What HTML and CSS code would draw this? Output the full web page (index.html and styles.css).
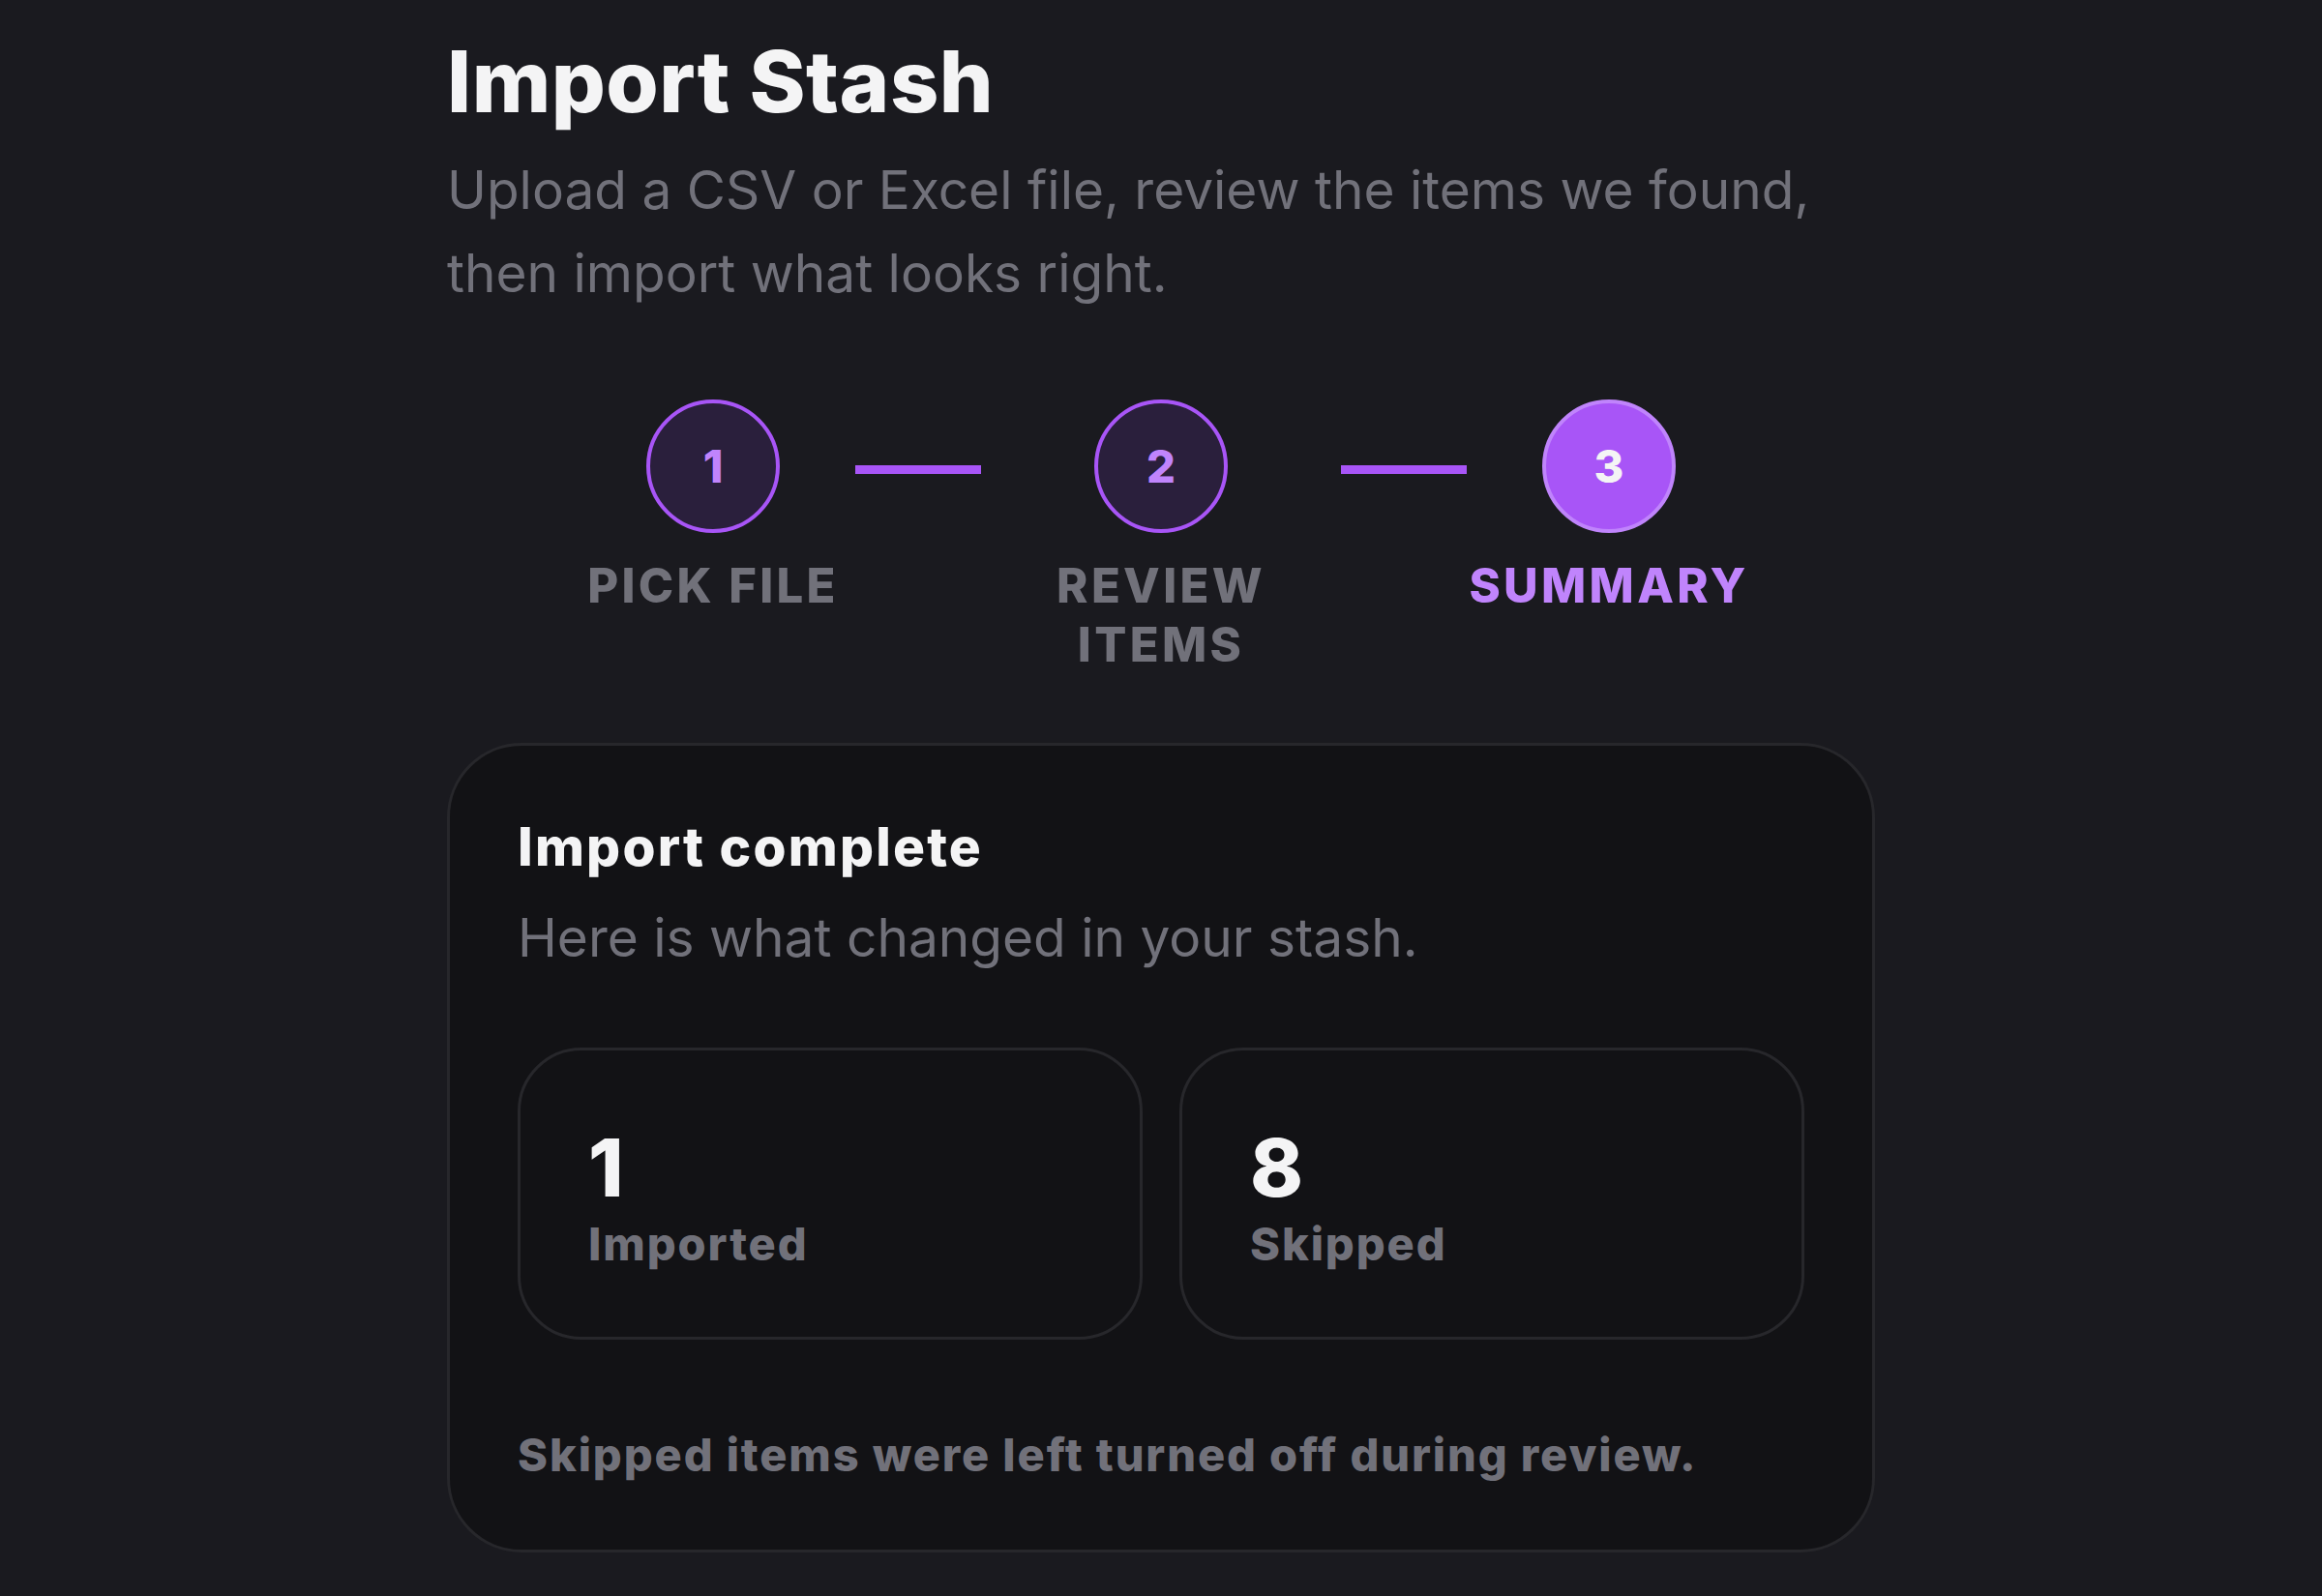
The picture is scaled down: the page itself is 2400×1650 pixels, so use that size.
FILE: index.html
```html
<!DOCTYPE html>
<html lang="en">
<head>
<meta charset="utf-8">
<title>Import Stash</title>
<link rel="stylesheet" href="styles.css">
</head>
<body>
<main class="page">
  <header class="page-head">
    <h1 class="title">Import Stash</h1>
    <p class="lead">Upload a CSV or Excel file, review the items we found, then import what looks right.</p>
  </header>

  <ol class="stepper">
    <li class="step done">
      <span class="step-dot">1</span>
      <span class="step-label">PICK FILE</span>
    </li>
    <li class="connector" aria-hidden="true"></li>
    <li class="step done">
      <span class="step-dot">2</span>
      <span class="step-label">REVIEW ITEMS</span>
    </li>
    <li class="connector" aria-hidden="true"></li>
    <li class="step current">
      <span class="step-dot">3</span>
      <span class="step-label">SUMMARY</span>
    </li>
  </ol>

  <section class="card">
    <h2 class="card-title">Import complete</h2>
    <p class="card-sub">Here is what changed in your stash.</p>
    <div class="stats">
      <div class="stat">
        <div class="stat-num">1</div>
        <div class="stat-label">Imported</div>
      </div>
      <div class="stat">
        <div class="stat-num">8</div>
        <div class="stat-label">Skipped</div>
      </div>
    </div>
    <p class="note">Skipped items were left turned off during review.</p>
  </section>
</main>
</body>
</html>
```

FILE: styles.css
```css
* { box-sizing: border-box; }

html, body {
  margin: 0;
  padding: 0;
  background: #1a1a1f;
}

body {
  font-family: "Inter", "Noto Sans", "Liberation Sans", sans-serif;
  color: #f4f4f5;
}

.page {
  width: 1476px;
  margin: 0 auto;
  padding-top: 32px;
}

.title {
  margin: 0;
  font-size: 88px;
  line-height: 1.2;
  font-weight: 800;
  letter-spacing: 0.5px;
  color: #f4f4f5;
}

.lead {
  margin: 15px 0 0;
  width: 1420px;
  font-size: 55px;
  line-height: 86px;
  font-weight: 400;
  color: #71717a;
}

.stepper {
  list-style: none;
  margin: 88px 0 0;
  padding: 0;
  display: grid;
  grid-template-columns: 262px 130px 340px 130px 262px;
  column-gap: 16px;
  justify-content: center;
  align-items: start;
}

.step {
  display: flex;
  flex-direction: column;
  align-items: center;
}

.step-dot {
  width: 138px;
  height: 138px;
  border-radius: 50%;
  border: 4px solid #a855f7;
  background: #2a1f3c;
  color: #c084fc;
  display: flex;
  align-items: center;
  justify-content: center;
  font-size: 47px;
  font-weight: 800;
  line-height: 1;
}

.step.current .step-dot {
  background: #a855f7;
  border-color: #c084fc;
  color: #f4f4f5;
}

.step-label {
  margin-top: 24px;
  font-size: 49px;
  line-height: 61px;
  font-weight: 800;
  letter-spacing: 0.068em;
  color: #71717a;
  text-align: center;
}

.step.current .step-label {
  color: #c084fc;
}

.connector {
  height: 9px;
  margin-top: 68px;
  background: #a855f7;
}

.card {
  margin-top: 71px;
  background: #121215;
  border: 3px solid #27272b;
  border-radius: 77px;
  padding: 69px 70px 62px;
}

.card-title {
  margin: 0;
  font-size: 55px;
  line-height: 1.3;
  font-weight: 800;
  letter-spacing: 0.04em;
  color: #f4f4f5;
}

.card-sub {
  margin: 14px 0 0;
  font-size: 55px;
  line-height: 88px;
  font-weight: 400;
  color: #71717a;
}

.stats {
  margin-top: 70px;
  display: grid;
  grid-template-columns: 1fr 1fr;
  column-gap: 38px;
}

.stat {
  border: 3px solid #27272b;
  border-radius: 66px;
  padding: 72px 70px 68px;
}

.stat-num {
  font-size: 83px;
  line-height: 1.2;
  font-weight: 800;
  color: #f4f4f5;
}

.stat-label {
  font-size: 47px;
  line-height: 1.2;
  font-weight: 800;
  letter-spacing: 0.04em;
  color: #71717a;
}

.note {
  margin: 84px 0 0;
  font-size: 47px;
  line-height: 1.5;
  font-weight: 800;
  letter-spacing: 0.04em;
  color: #71717a;
}
```
